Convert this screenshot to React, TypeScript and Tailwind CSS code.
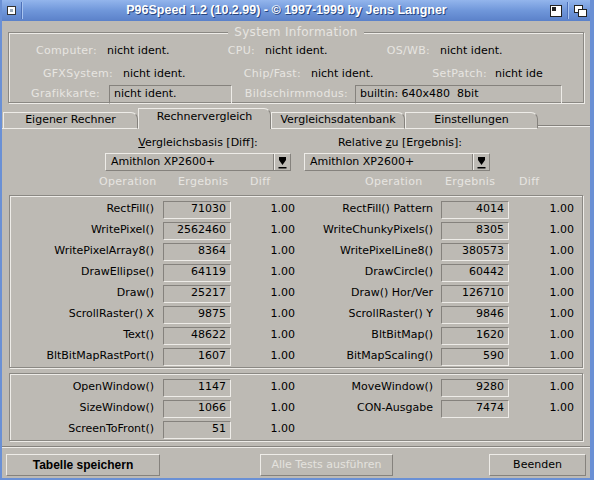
import React from 'react';

const bevelUp = 'border border-t-[#eeece8] border-l-[#eeece8] border-b-[#85827d] border-r-[#85827d]';
const bevelDown = 'border border-t-[#85827d] border-l-[#85827d] border-b-[#eeece8] border-r-[#eeece8]';
const groupBox = 'border border-[#8a8883] shadow-[inset_1px_1px_0_#eeece8,1px_1px_0_#eeece8]';

type Row = { op: string; res: string; diff: string };

const leftRows: Row[] = [
  { op: 'RectFill()', res: '71030', diff: '1.00' },
  { op: 'WritePixel()', res: '2562460', diff: '1.00' },
  { op: 'WritePixelArray8()', res: '8364', diff: '1.00' },
  { op: 'DrawEllipse()', res: '64119', diff: '1.00' },
  { op: 'Draw()', res: '25217', diff: '1.00' },
  { op: 'ScrollRaster() X', res: '9875', diff: '1.00' },
  { op: 'Text()', res: '48622', diff: '1.00' },
  { op: 'BltBitMapRastPort()', res: '1607', diff: '1.00' },
];

const rightRows: Row[] = [
  { op: 'RectFill() Pattern', res: '4014', diff: '1.00' },
  { op: 'WriteChunkyPixels()', res: '8305', diff: '1.00' },
  { op: 'WritePixelLine8()', res: '380573', diff: '1.00' },
  { op: 'DrawCircle()', res: '60442', diff: '1.00' },
  { op: 'Draw() Hor/Ver', res: '126710', diff: '1.00' },
  { op: 'ScrollRaster() Y', res: '9846', diff: '1.00' },
  { op: 'BltBitMap()', res: '1620', diff: '1.00' },
  { op: 'BitMapScaling()', res: '590', diff: '1.00' },
];

const winLeft: Row[] = [
  { op: 'OpenWindow()', res: '1147', diff: '1.00' },
  { op: 'SizeWindow()', res: '1066', diff: '1.00' },
  { op: 'ScreenToFront()', res: '51', diff: '1.00' },
];

const winRight: Row[] = [
  { op: 'MoveWindow()', res: '9280', diff: '1.00' },
  { op: 'CON-Ausgabe', res: '7474', diff: '1.00' },
];

function ResultRow({ row, side }: { row?: Row; side: 'l' | 'r' }) {
  const labelW = side === 'l' ? 'w-[143px]' : 'w-[138px]';
  const gap = side === 'l' ? 'ml-[9px]' : 'ml-[8px]';
  const diffW = side === 'l' ? 'w-[64px]' : 'w-[65px]';
  if (!row) return <div className="h-[21px]" />;
  return (
    <div className="flex h-[21px] items-center">
      <div className={`${labelW} text-right`}>{row.op}</div>
      <div className={`${gap} ${bevelDown} flex h-[18px] w-[68px] items-center justify-end pr-[4px]`}>{row.res}</div>
      <div className={`${diffW} text-right`}>{row.diff}</div>
    </div>
  );
}

function ResultGroup({ left, right, rows, className }: { left: Row[]; right: Row[]; rows: number; className: string }) {
  const idx = Array.from({ length: rows }, (_, i) => i);
  return (
    <div className={`${groupBox} mx-[7px] flex px-[1px] ${className}`}>
      <div className="flex flex-col">
        {idx.map((i) => (
          <ResultRow key={i} row={left[i]} side="l" />
        ))}
      </div>
      <div className="flex flex-col">
        {idx.map((i) => (
          <ResultRow key={i} row={right[i]} side="r" />
        ))}
      </div>
    </div>
  );
}

function PopIcon() {
  return (
    <svg width="9" height="13" viewBox="0 0 9 13">
      <path d="M1 1h7v3l-3.5 5L1 4z" fill="#000" />
      <rect x="0.5" y="11" width="8" height="1.5" fill="#000" />
    </svg>
  );
}

function Dropdown({ w }: { w: string }) {
  return (
    <div className={`${bevelUp} flex h-[18px] ${w} items-center`}>
      <div className="flex-1 pl-[5px]">Amithlon XP2600+</div>
      <div className="flex h-full w-[17px] items-center justify-center border-l border-l-[#85827d] shadow-[inset_1px_0_0_#eeece8]">
        <PopIcon />
      </div>
    </div>
  );
}

function Tab({ label, active, w }: { label: string; active?: boolean; w: string }) {
  if (active) {
    return (
      <div className={`${w} flex h-[21px] items-center justify-center rounded-tr-[7px] border border-b-0 border-t-[#eeece8] border-l-[#eeece8] border-r-[#85827d] pb-[3px]`}>
        {label}
      </div>
    );
  }
  return (
    <div className={`${w} mt-[4px] flex h-[17px] items-center justify-center rounded-tr-[7px] border border-t-[#eeece8] border-l-[#eeece8] border-r-[#85827d] border-b-[#eeece8]`}>
      {label}
    </div>
  );
}

function Button({ label, w, bold, disabled }: { label: string; w: string; bold?: boolean; disabled?: boolean }) {
  return (
    <div
      className={`${bevelUp} ${w} flex h-[22px] items-center justify-center ${
        bold ? "font-['Liberation_Sans',sans-serif] text-[12px] font-bold" : ''
      } ${disabled ? 'text-[#e4e2de]' : 'text-black'}`}
    >
      {label}
    </div>
  );
}

export default function App() {
  const lbl = 'text-[#e7e5e1] tracking-[0.3px]';
  return (
    <div className="flex h-[480px] w-[594px] flex-col overflow-hidden border-b-[2px] border-l-[2px] border-r-[4px] border-[#6a90d5] bg-[#bdbab4] font-['DejaVu_Sans',sans-serif] text-[11px] text-black">
      {/* title bar */}
      <div className="flex h-[21px] shrink-0 items-center bg-gradient-to-b from-[#93b5ec] via-[#7097da] to-[#5b81c9]">
        <div className="flex w-[19px] items-center justify-center">
          <div className="flex h-[9px] w-[9px] items-center justify-center border border-[#333] bg-white">
            <div className="h-[3px] w-[3px] bg-[#9ab]" />
          </div>
        </div>
        <div className="h-[17px] w-[2px] border-l border-l-[#4d70b8] border-r border-r-[#a8c4f0]" />
        <div className="flex-1 text-center font-['Liberation_Sans',sans-serif] text-[12.5px] font-bold text-white [text-shadow:1px_1px_0_#27457f]">
          P96Speed 1.2 (10.2.99) - © 1997-1999 by Jens Langner
        </div>
        <div className="flex items-center gap-[5px] pr-[3px]">
          <svg width="12" height="12" viewBox="0 0 12 12">
            <rect x="0.5" y="0.5" width="11" height="11" fill="#fff" stroke="#222" />
            <rect x="2" y="2" width="4" height="4" fill="#222" />
          </svg>
          <div className="h-[17px] w-[2px] border-l border-l-[#4d70b8] border-r border-r-[#a8c4f0]" />
          <svg width="13" height="12" viewBox="0 0 13 12">
            <rect x="0.5" y="0.5" width="8" height="7" fill="#fff" stroke="#222" />
            <rect x="4.5" y="4.5" width="8" height="7" fill="#fff" stroke="#222" />
          </svg>
        </div>
      </div>

      {/* system information */}
      <fieldset className={`${groupBox} mx-[6px] mt-[2px] h-[80px] shrink-0 px-0`}>
        <legend className={`mx-auto bg-[#bdbab4] px-[6px] text-[12px] ${lbl}`}>System Information</legend>
        <div className="flex h-[20px] items-center">
          <div className={`w-[88px] text-right ${lbl}`}>Computer:</div>
          <div className="w-[103px] pl-[10px]">nicht ident.</div>
          <div className={`w-[55px] text-right ${lbl}`}>CPU:</div>
          <div className="w-[130px] pl-[10px]">nicht ident.</div>
          <div className={`w-[45px] text-right ${lbl}`}>OS/WB:</div>
          <div className="pl-[10px]">nicht ident.</div>
        </div>
        <div className="mt-[3px] flex h-[20px] items-center">
          <div className={`w-[104px] text-right ${lbl}`}>GFXSystem:</div>
          <div className="w-[127px] pl-[10px]">nicht ident.</div>
          <div className={`w-[61px] text-right ${lbl}`}>Chip/Fast:</div>
          <div className="w-[119px] pl-[10px]">nicht ident.</div>
          <div className={`w-[67px] text-right ${lbl}`}>SetPatch:</div>
          <div className="w-[64px] overflow-hidden whitespace-nowrap pl-[8px]">nicht ide</div>
        </div>
        <div className="flex h-[20px] items-center">
          <div className={`w-[91px] text-right ${lbl}`}>Grafikkarte:</div>
          <div className={`${bevelDown} ml-[9px] flex h-[19px] w-[123px] items-center pl-[4px]`}>nicht ident.</div>
          <div className={`w-[116px] text-right ${lbl}`}>Bildschirmmodus:</div>
          <div className={`${bevelDown} ml-[7px] flex h-[19px] w-[207px] items-center pl-[4px] whitespace-pre`}>builtin: 640x480  8bit</div>
        </div>
      </fieldset>

      {/* tabs */}
      <div className="mt-[5px] flex h-[21px] shrink-0 items-end">
        <div className="h-[1px] w-[1px] bg-[#eeece8]" />
        <Tab label="Eigener Rechner" w="w-[135px]" />
        <Tab label="Rechnervergleich" w="w-[133px]" active />
        <Tab label="Vergleichsdatenbank" w="w-[134px]" />
        <Tab label="Einstellungen" w="w-[133px]" />
        <div className="mb-[2px] h-[1px] flex-1 bg-[#eeece8] shadow-[0_-1px_0_#85827d]" />
      </div>

      {/* selectors */}
      <div className="mt-[6px] flex shrink-0">
        <div className="ml-[103px] flex w-[186px] flex-col items-center">
          <div className="h-[18px]">
            <span className="underline">V</span>ergleichsbasis [Diff]:
          </div>
          <Dropdown w="w-[186px]" />
        </div>
        <div className="ml-[13px] flex w-[186px] flex-col items-center">
          <div className="h-[18px] pl-[6px]">
            Relative <span className="underline">z</span>u [Ergebnis]:
          </div>
          <Dropdown w="w-[186px]" />
        </div>
      </div>

      {/* column headers */}
      <div className={`mt-[3px] flex h-[16px] shrink-0 items-center ${lbl}`}>
        <div className="w-[97px]" />
        <div className="w-[79px]">Operation</div>
        <div className="w-[72px]">Ergebnis</div>
        <div className="w-[115px]">Diff</div>
        <div className="w-[80px]">Operation</div>
        <div className="w-[74px]">Ergebnis</div>
        <div>Diff</div>
      </div>

      <ResultGroup left={leftRows} right={rightRows} rows={8} className="mt-[5px] h-[173px] shrink-0 pt-[3px]" />
      <ResultGroup left={winLeft} right={winRight} rows={3} className="mt-[5px] h-[68px] shrink-0 pt-[3px]" />

      {/* separator */}
      <div className="mt-[5px] h-[2px] shrink-0 border-t border-t-[#85827d] border-b border-b-[#eeece8]" />

      {/* buttons */}
      <div className="mt-[6px] flex shrink-0 items-center px-[4px]">
        <Button label="Tabelle speichern" w="w-[154px]" bold />
        <div className="ml-[100px]">
          <Button label="Alle Tests ausführen" w="w-[133px]" disabled />
        </div>
        <div className="ml-auto">
          <Button label="Beenden" w="w-[97px]" />
        </div>
      </div>
    </div>
  );
}
